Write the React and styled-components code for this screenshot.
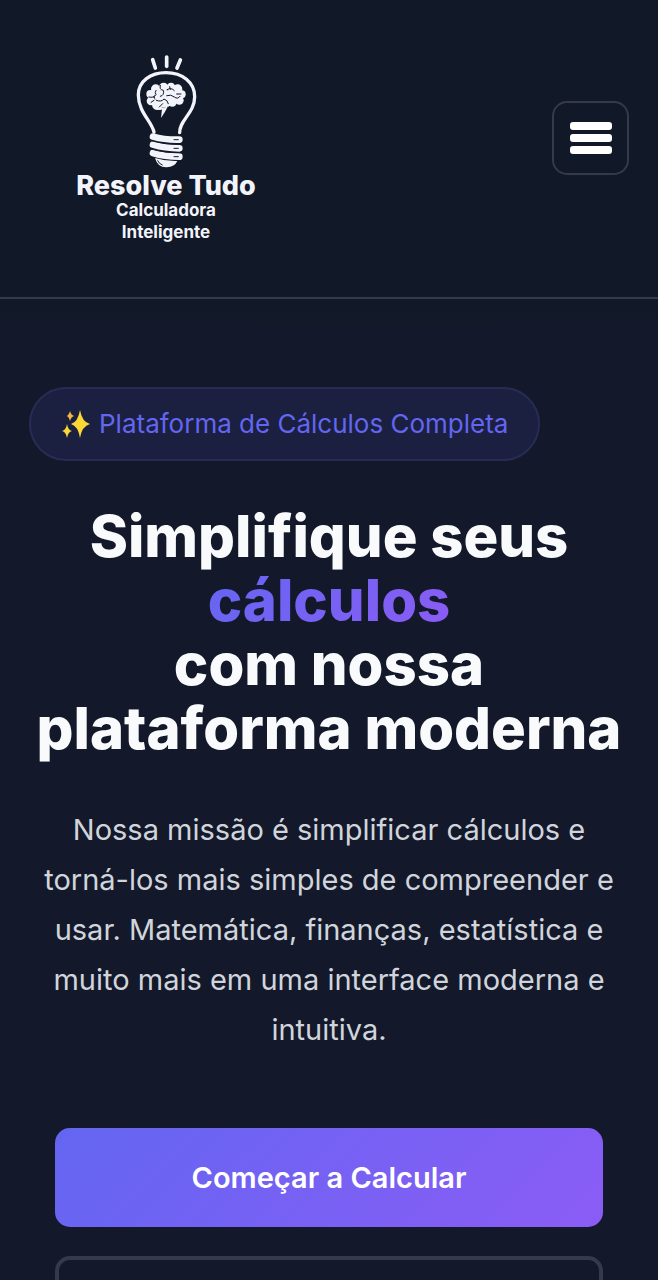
import React, { useState } from "react";
import styled, { createGlobalStyle } from "styled-components";

const GlobalStyle = createGlobalStyle`
    * {
        box-sizing: border-box;
    }

    body {
        margin: 0;
        background: #13192b;
        color: #f9fafb;
        font-family: Inter, "Liberation Sans", sans-serif;
    }
`;

const Header = styled.header`
    display: flex;
    justify-content: space-between;
    align-items: center;
    padding: 29px 29px 50px;
    background: #111827;
    border-bottom: 2px solid #343a49;
`;

const LogoLink = styled.a`
    width: 274px;
    display: flex;
    flex-direction: column;
    align-items: center;
    padding: 21px 0 4px;
    color: #f3f4fb;
    text-decoration: none;
`;

const LogoName = styled.span`
    font-size: 27px;
    font-weight: 800;
    line-height: 26px;
`;

const LogoTagline = styled.span`
    width: 120px;
    font-size: 17px;
    font-weight: 700;
    line-height: 22px;
    text-align: center;
`;

const MenuButton = styled.button`
    width: 77px;
    height: 74px;
    display: flex;
    flex-direction: column;
    align-items: center;
    justify-content: center;
    gap: 4px;
    padding: 0;
    background: transparent;
    border: 2px solid #343a49;
    border-radius: 15px;
    cursor: pointer;
`;

const MenuBar = styled.span`
    width: 42px;
    height: 8px;
    border-radius: 3px;
    background: #ffffff;
`;

const Hero = styled.main`
    padding: 88px 29px;
    background: linear-gradient(#111827, #13192b 50px);
`;

const Badge = styled.div`
    width: fit-content;
    display: flex;
    align-items: center;
    gap: 8px;
    padding: 19px 30px;
    border: 2px solid #282c54;
    border-radius: 37px;
    background: #1b2040;
    color: #6366f1;
    font-size: 26px;
    font-weight: 400;
    line-height: 32px;
`;

const Title = styled.h1`
    margin: 43px 0 45px;
    font-size: 58px;
    font-weight: 800;
    font-optical-sizing: none;
    line-height: 64px;
    text-align: center;
`;

const Highlight = styled.span`
    background: linear-gradient(135deg, #6366f1, #8b5cf6);
    background-clip: text;
    -webkit-background-clip: text;
    color: transparent;
`;

const Description = styled.p`
    margin: 0 0 73px;
    color: #d1d5db;
    font-size: 29px;
    line-height: 50px;
    text-align: center;
`;

const Actions = styled.div`
    display: flex;
    flex-direction: column;
    gap: 29px;
    padding: 0 26px;
`;

const ActionButton = styled.button`
    min-height: 99px;
    padding: 0 29px;
    border: ${(props) => (props.$outline ? "4px solid #343a49" : "0")};
    border-radius: 15px;
    background: ${(props) => (props.$outline ? "transparent" : "linear-gradient(135deg, #6366f1, #8b5cf6)")};
    color: #ffffff;
    font-family: inherit;
    font-size: 29px;
    font-weight: 600;
    cursor: pointer;
`;

function BulbLogo(){
    return (
        <svg width="72" height="123" viewBox="0 0 216 369" fill="none" stroke="#f3f4fb" strokeLinecap="round" aria-hidden="true">
            <g strokeWidth="11">
                <path d="M68 29 L76 54" />
                <path d="M110 21 V49" />
                <path d="M151 30 L141 54" />
            </g>
            <path strokeWidth="10" d="M72 247 C67 216 25 187 25 135 C25 93 62 68 108 68 C157 68 194 97 194 140 C194 190 148 210 149 248" />
            <g fill="#f3f4fb" stroke="none">
                <circle cx="61" cy="132" r="12" />
                <circle cx="63" cy="153" r="13" />
                <circle cx="77" cy="117" r="14" />
                <circle cx="101" cy="112" r="14" />
                <circle cx="123" cy="111" r="13" />
                <circle cx="143" cy="117" r="14" />
                <circle cx="155" cy="133" r="12" />
                <circle cx="148" cy="151" r="13" />
                <circle cx="127" cy="157" r="13" />
                <circle cx="82" cy="164" r="16" />
                <path d="M70 123 L139 119 L148 150 L115 170 L82 174Z" />
                <path d="M78 176 Q94 183 96 177 L93 204 Q105 187 113 170Z" />
            </g>
            <g stroke="#111827" strokeWidth="3">
                <path d="M57 141 Q70 145 78 134 Q73 127 78 121" />
                <path d="M91 106 Q87 119 100 121 Q104 136 91 139" />
                <path d="M111 119 Q124 111 133 122 M121 118 L119 110" />
                <path d="M110 137 Q123 132 133 141 Q143 149 150 139" />
                <path d="M79 151 Q94 157 102 147 Q113 150 115 161" />
                <path d="M88 171 L98 161 M140 132 H153 M63 157 L72 151" />
            </g>
            <g strokeWidth="20">
                <path d="M69 260 Q104 270 148 269" />
                <path d="M69 284 Q104 295 148 295" />
                <path d="M69 309 Q104 320 148 320" />
            </g>
            <path fill="#f3f4fb" stroke="none" d="M75 324 Q106 334 142 333 Q134 351 110 352 Q83 353 75 324Z" />
            <g stroke="#111827" strokeWidth="3">
                <path d="M63 272 Q103 284 151 282 M63 297 Q102 309 151 308" />
                <path d="M132 269 H145 M132 295 H145 M132 320 H145" />
                <path d="M83 332 Q87 342 97 345" />
            </g>
        </svg>
    );
}

function Sparkles(){
    return (
        <svg width="30" height="30" viewBox="0 0 30 30" aria-hidden="true">
            <path fill="#fdd835" d="M19 1 Q21 13 29 15 Q21 17 19 29 Q17 17 10 15 Q17 13 19 1Z" />
            <path fill="#fdd835" d="M6 15 Q7 21 11 22 Q7 23 6 29 Q5 23 1 22 Q5 21 6 15Z" />
            <path fill="#f4b43f" d="M9 2 Q10 6 13 7 Q10 8 9 12 Q8 8 6 7 Q8 6 9 2Z" />
        </svg>
    );
}

export default function App(){

    const [menuOpen, setMenuOpen] = useState(false);

    return (
    <>
        <GlobalStyle />
        <Header>
            <LogoLink href="/">
                <BulbLogo />
                <LogoName>Resolve Tudo</LogoName>
                <LogoTagline>Calculadora Inteligente</LogoTagline>
            </LogoLink>
            <MenuButton type="button" aria-label="Menu" aria-expanded={menuOpen} onClick={() => setMenuOpen(!menuOpen)}>
                <MenuBar />
                <MenuBar />
                <MenuBar />
            </MenuButton>
        </Header>
        <Hero>
            <Badge>
                <Sparkles />
                <span>Plataforma de Cálculos Completa</span>
            </Badge>
            <Title>
                Simplifique seus <Highlight>cálculos</Highlight>
                <br />
                com nossa plataforma moderna
            </Title>
            <Description>
                Nossa missão é simplificar cálculos e torná-los mais simples de compreender e usar.
                Matemática, finanças, estatística e muito mais em uma interface moderna e intuitiva.
            </Description>
            <Actions>
                <ActionButton type="button">Começar a Calcular</ActionButton>
                <ActionButton type="button" $outline aria-label="Saiba Mais" />
            </Actions>
        </Hero>
    </>
    );
}
